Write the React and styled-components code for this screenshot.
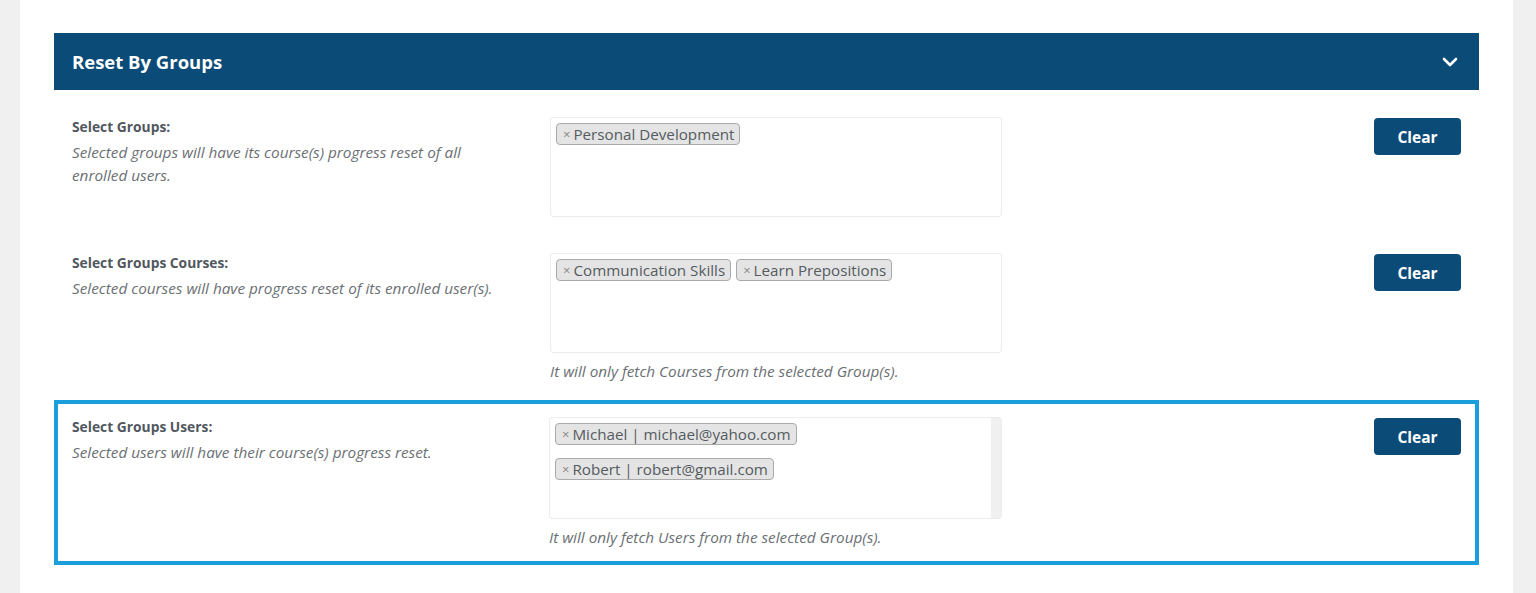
import React from 'react';
import styled, { createGlobalStyle } from 'styled-components';

const GlobalStyle = createGlobalStyle`
	html, body {
		margin: 0;
		padding: 0;
		background: #f0f0f1;
	}
	body {
		font-family: "Open Sans", "Noto Sans", sans-serif;
	}
`;

const Page = styled.div`
	height: 593px;
	padding: 0 23px 0 20px;
	box-sizing: border-box;
	overflow: hidden;
`;

const Panel = styled.div`
	background: #ffffff;
	height: 100%;
	padding: 33px 34px 0;
	box-sizing: border-box;
`;

const Header = styled.div`
	height: 57px;
	background: #0b4b78;
	display: flex;
	align-items: center;
	justify-content: space-between;
	padding: 0 20px 0 18px;
	margin-bottom: 10px;
`;

const Title = styled.h2`
	margin: 0;
	color: #ffffff;
	font-size: 18.5px;
	font-weight: 700;
`;

const Rows = styled.div`
	display: flex;
	flex-direction: column;
	gap: 2px;
`;

// active row gets the thick blue highlight, others keep the same box size
const Row = styled.div`
	display: grid;
	grid-template-columns: 478px 452px 1fr;
	align-items: start;
	padding: ${p => (p.$active ? '13px 14px 14px' : '14px 15px')};
	border: ${p => (p.$active ? '4px solid #1a9fdc' : '3px solid transparent')};
`;

const LabelCol = styled.div`
	max-width: 430px;
`;

const Label = styled.div`
	font-size: 13.8px;
	font-weight: 700;
	color: #50575e;
	line-height: 20px;
	margin-bottom: 4px;
`;

const Desc = styled.div`
	font-size: 15.3px;
	font-style: italic;
	color: #6b6f74;
	line-height: 23px;
`;

const Field = styled.div`
	margin-left: ${p => (p.$shift ? '-1px' : '0')};
`;

const SelectBox = styled.div`
	height: ${p => (p.$scroll ? 102 : 100)}px;
	border: 1px solid #ececec;
	border-radius: 3px;
	box-sizing: border-box;
	display: flex;
	align-items: flex-start;
	overflow: hidden;
`;

const TagList = styled.div`
	flex: 1;
	display: flex;
	flex-wrap: wrap;
	align-content: flex-start;
	gap: ${p => (p.$loose ? '13px 5px' : '5px')};
	padding: 5px 5px;
`;

const Scrollbar = styled.div`
	width: 10px;
	align-self: stretch;
	background: #f0f0f0;
`;

const Tag = styled.span`
	display: inline-flex;
	align-items: center;
	height: 22px;
	padding: 0 5px 0 6px;
	background: #e4e4e4;
	border: 1px solid #aaaaaa;
	border-radius: 4px;
	box-sizing: border-box;
	font-size: 15.2px;
	color: #555b60;
	white-space: nowrap;
`;

const Remove = styled.span`
	color: #888;
	font-size: 13px;
	margin-right: 3px;
`;

const Helper = styled.div`
	margin-top: 8px;
	font-size: 15.3px;
	font-style: italic;
	color: #6b6f74;
	line-height: 20px;
`;

const ButtonCol = styled.div`
	display: flex;
	justify-content: flex-end;
	padding-top: 1px;
`;

const ClearButton = styled.button`
	width: 87px;
	height: 37px;
	background: #0b4b78;
	color: #ffffff;
	border: none;
	border-radius: 4px;
	font-family: inherit;
	font-size: 15.5px;
	font-weight: 700;
	cursor: pointer;
`;

const Chevron = () => (
	<svg width="18" height="12" viewBox="0 0 18 12">
		<path d="M3 3 L9 9 L15 3" fill="none" stroke="#fff" strokeWidth="2.6" strokeLinecap="round" strokeLinejoin="round" />
	</svg>
);

const rows = [
	{
		label: 'Select Groups:',
		desc: 'Selected groups will have its course(s) progress reset of all enrolled users.',
		tags: ['Personal Development'],
	},
	{
		label: 'Select Groups Courses:',
		desc: 'Selected courses will have progress reset of its enrolled user(s).',
		tags: ['Communication Skills', 'Learn Prepositions'],
		helper: 'It will only fetch Courses from the selected Group(s).',
	},
	{
		label: 'Select Groups Users:',
		desc: 'Selected users will have their course(s) progress reset.',
		tags: ['Michael | michael@yahoo.com', 'Robert | robert@gmail.com'],
		helper: 'It will only fetch Users from the selected Group(s).',
		active: true,
	},
];

const App = () => {
	return (
		<Page>
			<GlobalStyle />
			<Panel>
				<Header>
					<Title>Reset By Groups</Title>
					<Chevron />
				</Header>
				<Rows>
					{rows.map((row) => (
						<Row key={row.label} $active={row.active}>
							<LabelCol>
								<Label>{row.label}</Label>
								<Desc>{row.desc}</Desc>
							</LabelCol>
							<Field $shift={row.active}>
								<SelectBox $scroll={row.active}>
									<TagList $loose={row.active}>
										{row.tags.map((tag) => (
											<Tag key={tag}>
												<Remove>×</Remove>
												{tag}
											</Tag>
										))}
									</TagList>
									{row.active && <Scrollbar />}
								</SelectBox>
								{row.helper && <Helper>{row.helper}</Helper>}
							</Field>
							<ButtonCol>
								<ClearButton>Clear</ClearButton>
							</ButtonCol>
						</Row>
					))}
				</Rows>
			</Panel>
		</Page>
	);
};

export default App;
